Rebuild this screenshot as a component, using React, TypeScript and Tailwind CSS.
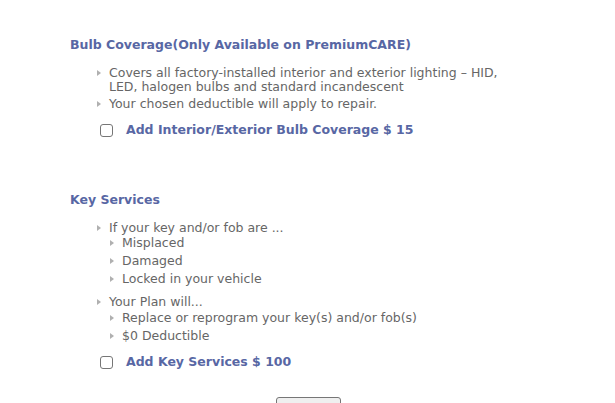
import React from "react";

const Arrow = () => (
  <svg width="4" height="6" viewBox="0 0 4 6" className="shrink-0 mt-[4px]">
    <path d="M0 0 L4 3 L0 6 Z" fill="#b0b0b0" />
  </svg>
);

const Item = ({ children, className = "" }: { children: React.ReactNode; className?: string }) => (
  <li className={`flex gap-[8px] ${className}`}>
    <Arrow />
    <div>{children}</div>
  </li>
);

const Check = ({ label }: { label: string }) => (
  <label className="flex items-center gap-[13px] ml-[30px]">
    <span className="w-[13px] h-[13px] rounded-[3px] border border-[#767676] bg-white shrink-0" />
    <span className="font-bold text-[#5867a4] text-[12.5px]">{label}</span>
  </label>
);

export default function App() {
  return (
    <div
      className="w-[615px] h-[403px] bg-white overflow-hidden text-[12.5px] text-[#666] leading-[14px]"
      style={{ fontFamily: '"DejaVu Sans", Verdana, sans-serif' }}
    >
      <div className="pl-[70px] pt-[38px]">
        <h2 className="font-bold text-[#5867a4] text-[12.5px] leading-[14px]">
          Bulb Coverage(Only Available on PremiumCARE)
        </h2>
        <ul className="ml-[27px] mt-[14px] flex flex-col gap-[3px]">
          <Item>
            Covers all factory-installed interior and exterior lighting – HID,
            <br />
            LED, halogen bulbs and standard incandescent
          </Item>
          <Item>Your chosen deductible will apply to repair.</Item>
        </ul>
        <div className="mt-[12px]">
          <Check label="Add Interior/Exterior Bulb Coverage $ 15" />
        </div>

        <h2 className="font-bold text-[#5867a4] text-[12.5px] leading-[14px] mt-[56px]">Key Services</h2>
        <ul className="ml-[27px] mt-[14px] flex flex-col gap-[9px]">
          <Item>
            If your key and/or fob are ...
            <ul className="flex flex-col gap-[4px] mt-[1px] ml-[1px]">
              <Item>Misplaced</Item>
              <Item>Damaged</Item>
              <Item>Locked in your vehicle</Item>
            </ul>
          </Item>
          <Item>
            Your Plan will...
            <ul className="flex flex-col gap-[4px] mt-[2px] ml-[1px]">
              <Item>Replace or reprogram your key(s) and/or fob(s)</Item>
              <Item>$0 Deductible</Item>
            </ul>
          </Item>
        </ul>
        <div className="mt-[12px]">
          <Check label="Add Key Services $ 100" />
        </div>
        <div className="mt-[28px] ml-[206px] w-[65px] h-[20px] border border-[#767676] rounded-[3px] bg-[#efefef]" />
      </div>
    </div>
  );
}
